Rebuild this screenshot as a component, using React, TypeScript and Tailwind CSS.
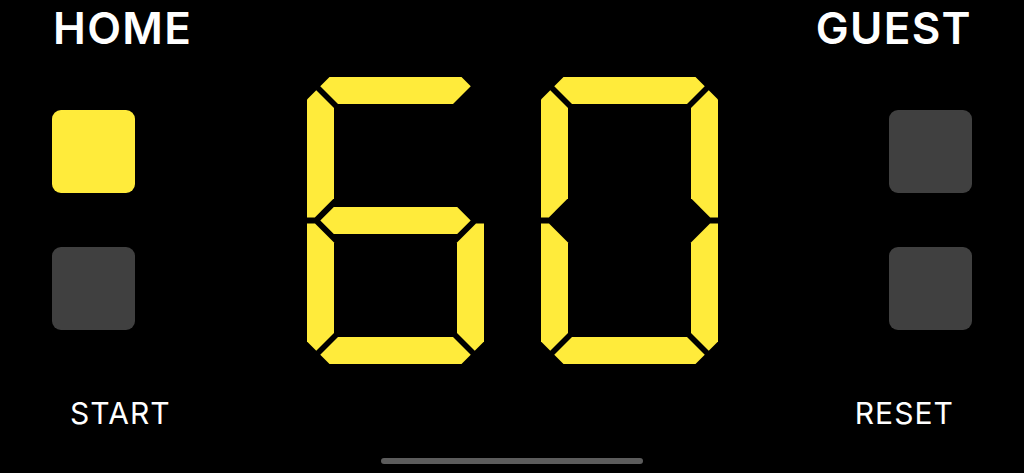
import type { ReactNode } from "react";

const YELLOW = "#FFEB3B";

// seven-segment shapes in a 177x287 cell
const SEGMENTS: Record<string, string> = {
  a: "22.5,0 154.5,0 163.75,9.25 146,27 31,27 13.25,9.25",
  b: "177,22.5 167.75,13.25 150,31 150,121.3 169.2,140.5 177,140.5",
  c: "177,146.5 169,146.5 150,165.5 150,256 167.75,273.75 177,264.5",
  d: "22.5,287 154.5,287 163.75,277.75 146,260 31,260 13.25,277.75",
  e: "0,146.5 8,146.5 27,165.5 27,256 9.25,273.75 0,264.5",
  f: "0,22.5 9.25,13.25 27,31 27,121.3 7.8,140.5 0,140.5",
  g: "26.8,130 150.2,130 163.7,143.5 150.2,157 26.8,157 13.3,143.5",
};

const DIGITS: Record<string, string> = {
  "0": "abcdef",
  "1": "bc",
  "2": "abged",
  "3": "abgcd",
  "4": "fgbc",
  "5": "afgcd",
  "6": "afgedc",
  "7": "abc",
  "8": "abcdefg",
  "9": "abcdfg",
};

function Digit({ value }: { value: string }) {
  const lit = DIGITS[value] ?? "";
  return (
    <svg width="177" height="287" viewBox="0 0 177 287" className="block">
      {lit.split("").map((key) => (
        <polygon key={key} points={SEGMENTS[key]} fill={YELLOW} />
      ))}
    </svg>
  );
}

function Light({ on }: { on: boolean }) {
  return (
    <div
      className={
        on
          ? "size-[83px] rounded-[9px] bg-[#FFEB3B]"
          : "size-[83px] rounded-[9px] bg-[#404040]"
      }
    />
  );
}

function Side({
  title,
  action,
  lights,
  align,
}: {
  title: string;
  action: string;
  lights: [boolean, boolean];
  align: "left" | "right";
}) {
  const left = align === "left";
  return (
    <div
      className={
        left
          ? "flex flex-col items-start pl-[52px] pt-[6px]"
          : "flex flex-col items-end pr-[52px] pt-[6px]"
      }
    >
      <Label
        className={
          left
            ? "ml-[1px] text-[44px] font-semibold tracking-[0.03em]"
            : "mr-[0px] text-[44px] font-semibold tracking-[0.03em]"
        }
      >
        {title}
      </Label>
      <div className="mt-[60px] flex flex-col gap-[54px]">
        <Light on={lights[0]} />
        <Light on={lights[1]} />
      </div>
      <Label
        className={
          left
            ? "ml-[18px] mt-[68px] text-[30px] tracking-[0.035em]"
            : "mr-[18px] mt-[68px] text-[30px] tracking-[0.035em]"
        }
      >
        {action}
      </Label>
    </div>
  );
}

function Label({ className, children }: { className: string; children: ReactNode }) {
  return (
    <p className={`leading-none text-white font-['Inter',sans-serif] ${className}`}>
      {children}
    </p>
  );
}

export default function App() {
  return (
    <div className="flex h-[473px] w-full flex-col overflow-hidden bg-black">
      <div className="grid grid-cols-[1fr_auto_1fr]">
        <Side title="HOME" action="START" lights={[true, false]} align="left" />
        <div className="flex gap-[57px] pt-[77px]">
          <Digit value="6" />
          <Digit value="0" />
        </div>
        <Side title="GUEST" action="RESET" lights={[false, false]} align="right" />
      </div>
      <div className="mb-[9px] mt-auto flex justify-center">
        <div className="h-[6px] w-[262px] rounded-full bg-[#5c5c5c]" />
      </div>
    </div>
  );
}
